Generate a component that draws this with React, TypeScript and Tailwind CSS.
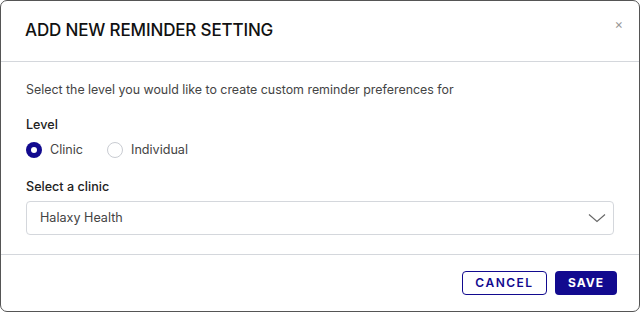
export default function App() {
  return (
    <div className="w-[640px] h-[312px] bg-white" style={{ fontFamily: 'Inter, "Liberation Sans", sans-serif' }}>
      <div className="h-full flex flex-col border border-[#555] rounded-[7px] bg-white">
        {/* Header */}
        <div className="h-[61px] shrink-0 flex items-center justify-between pl-[24px] pr-[16px] border-b border-[#d4d7dc]">
          <h2 className="text-[17px] font-medium text-[#111] tracking-[-0.15px]">ADD NEW REMINDER SETTING</h2>
          <button className="text-[#999] text-[13px] leading-none mb-[14px]">×</button>
        </div>

        {/* Body */}
        <div className="flex-1 px-[25px] pt-[19px]">
          <p className="text-[12.4px] text-[#444]">Select the level you would like to create custom reminder preferences for</p>

          <div className="mt-[16px] text-[12.6px] font-medium text-[#222]">Level</div>
          <div className="mt-[6px] flex items-center gap-[24px] text-[12.6px] text-[#444]">
            <label className="flex items-center gap-[8px]">
              <span className="w-[16px] h-[16px] rounded-full bg-[#120a8f] flex items-center justify-center">
                <span className="w-[6px] h-[6px] rounded-full bg-white" />
              </span>
              Clinic
            </label>
            <label className="flex items-center gap-[8px]">
              <span className="w-[16px] h-[16px] rounded-full border border-[#c9ccd2] bg-white" />
              Individual
            </label>
          </div>

          <div className="mt-[19px] text-[12.6px] font-medium text-[#222]">Select a clinic</div>
          <div className="mt-[4px] h-[34px] flex items-center justify-between pl-[13px] pr-[7px] border border-[#d4d7dc] rounded-[4px] text-[12.6px] text-[#444]">
            <span>Halaxy Health</span>
            <svg width="18" height="10" viewBox="0 0 18 10" fill="none">
              <path d="M1 1.5 L9 8.5 L17 1.5" stroke="#666" strokeWidth="1.1" />
            </svg>
          </div>
        </div>

        {/* Footer */}
        <div className="h-[57px] shrink-0 flex items-center justify-end gap-[8px] pr-[22px] border-t border-[#d4d7dc]">
          <button className="h-[24px] w-[85px] border border-[#120a8f] rounded-[4px] text-[#120a8f] text-[12px] font-semibold tracking-[1.5px]">CANCEL</button>
          <button className="h-[24px] w-[62px] bg-[#120a8f] rounded-[4px] text-white text-[12px] font-bold tracking-[1px]">SAVE</button>
        </div>
      </div>
    </div>
  );
}
